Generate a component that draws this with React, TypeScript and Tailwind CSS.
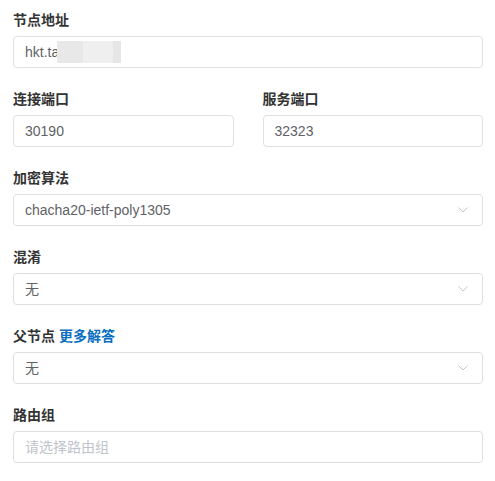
import React from 'react'

const font = { fontFamily: '"Liberation Sans", "Noto Sans CJK SC", sans-serif' }

function Label({ children }: { children: React.ReactNode }) {
  return <div className="text-sm font-bold leading-[21px] text-[#333] mb-[5px]">{children}</div>
}

function Chevron() {
  return (
    <svg width="10" height="6" viewBox="0 0 10 6" className="shrink-0">
      <path d="M0.5 0.5 L5 5 L9.5 0.5" fill="none" stroke="#c0c4cc" strokeWidth="1" />
    </svg>
  )
}

function Box({ children, select }: { children: React.ReactNode; select?: boolean }) {
  return (
    <div className="h-8 flex items-center border border-[#dcdfe6] rounded bg-white pl-[11px] pr-[14px] text-sm text-[#606266]">
      <div className="flex-1 flex items-center min-w-0">{children}</div>
      {select && <Chevron />}
    </div>
  )
}

export default function App() {
  return (
    <div className="w-[495px] h-[481px] bg-white px-[13px] pt-[10px] pr-[12px]" style={font}>
      {/* 节点地址 */}
      <div className="mb-[21px]">
        <Label>节点地址</Label>
        <Box>
          <span>hkt.ta</span>
          <span className="flex h-[22px] -ml-[2px]">
            <span className="w-[26px] bg-[#e8e8e8]" />
            <span className="w-[30px] bg-[#efefef]" />
            <span className="w-[8px] bg-[#e6e6e6]" />
          </span>
        </Box>
      </div>

      {/* 端口 */}
      <div className="grid grid-cols-2 gap-x-[29px] mb-[21px]">
        <div>
          <Label>连接端口</Label>
          <Box>30190</Box>
        </div>
        <div>
          <Label>服务端口</Label>
          <Box>32323</Box>
        </div>
      </div>

      <div className="mb-[21px]">
        <Label>加密算法</Label>
        <Box select>chacha20-ietf-poly1305</Box>
      </div>

      <div className="mb-[21px]">
        <Label>混淆</Label>
        <Box select>无</Box>
      </div>

      <div className="mb-[21px]">
        <Label>
          父节点 <span className="text-[#0b6ec2]">更多解答</span>
        </Label>
        <Box select>无</Box>
      </div>

      <div>
        <Label>路由组</Label>
        <Box>
          <span className="text-[#c0c4cc]">请选择路由组</span>
        </Box>
      </div>
    </div>
  )
}
